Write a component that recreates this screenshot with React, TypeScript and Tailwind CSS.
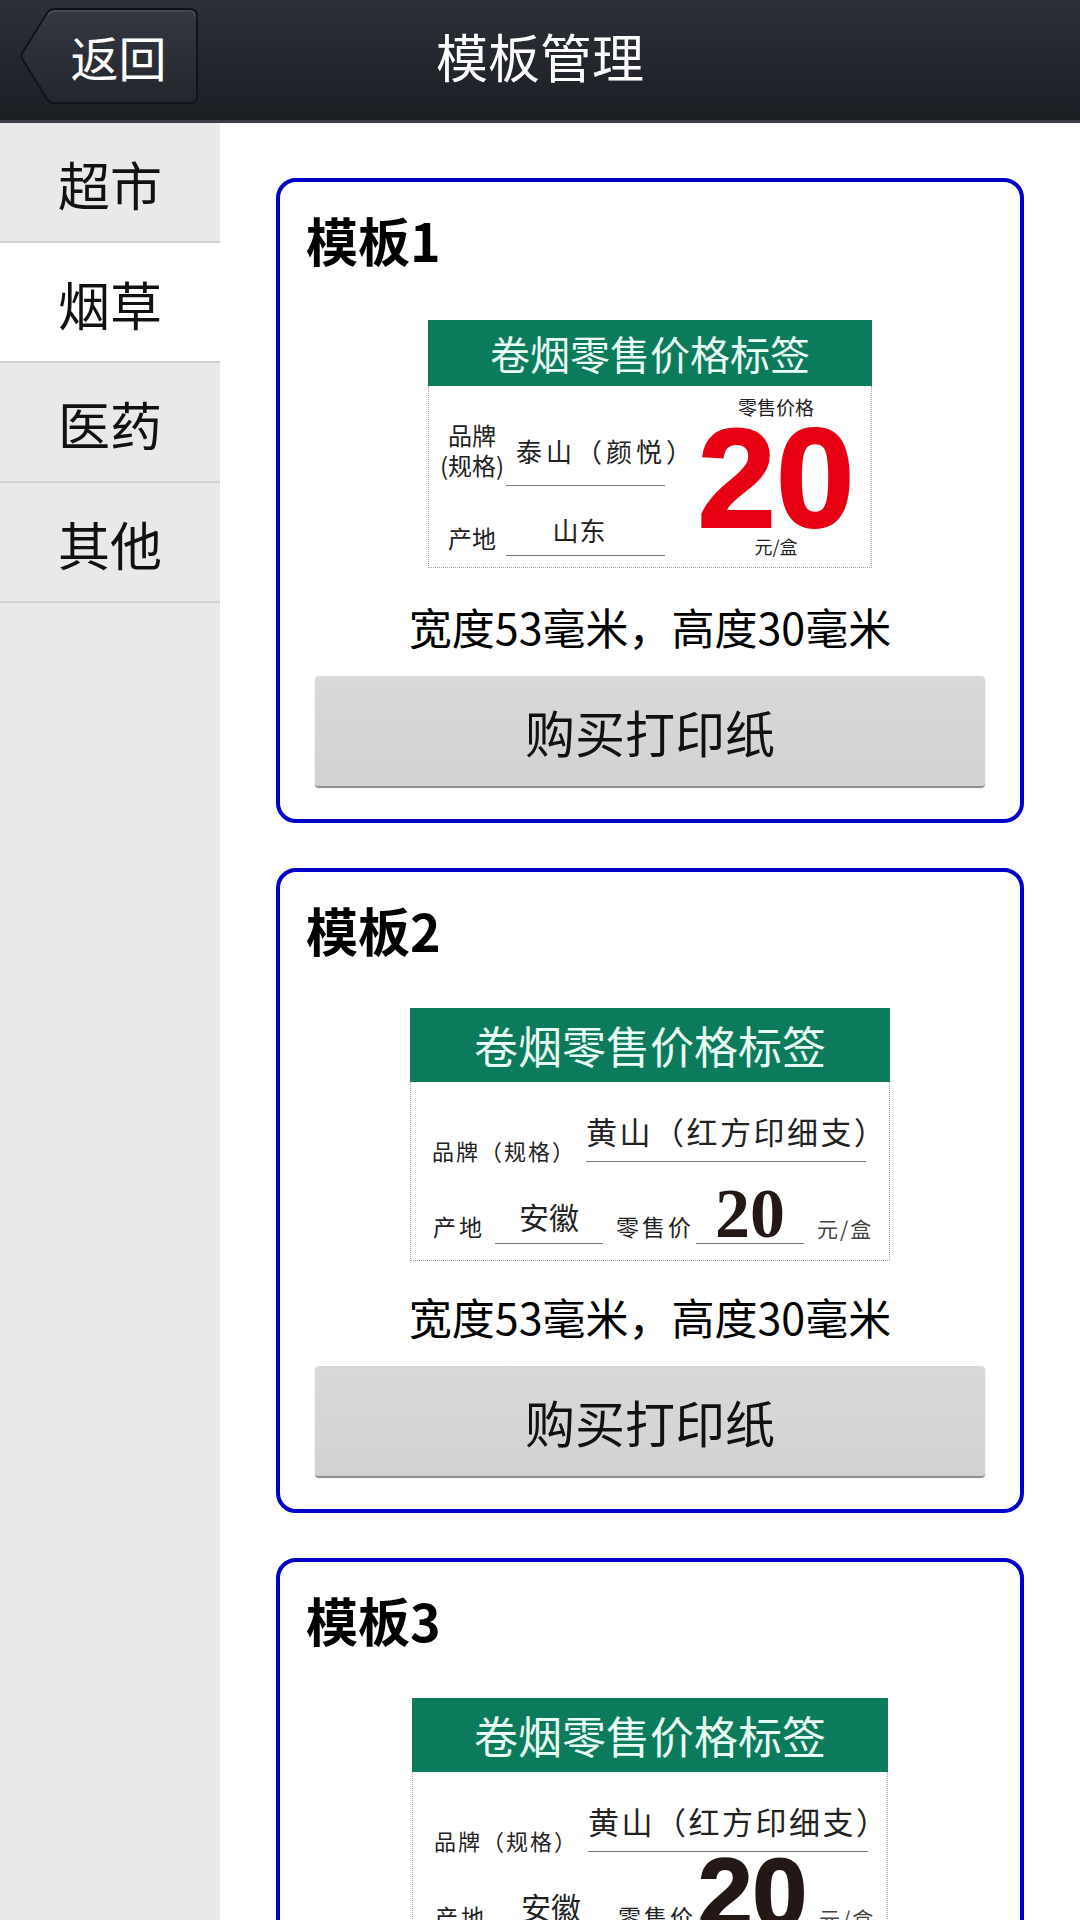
import React from 'react'

const cjk = "font-['Noto_Sans_CJK_SC','Noto_Sans',sans-serif]"

function BackButton() {
  return (
    <div className="relative mb-[9px] ml-[17px] flex h-[96px] w-[181px] items-center justify-center pl-[22px]">
      <svg className="absolute inset-0" width="181" height="96" viewBox="0 0 181 96">
        <defs>
          <linearGradient id="bb" x1="0" y1="0" x2="0" y2="1">
            <stop offset="0" stopColor="#343841" />
            <stop offset="1" stopColor="#23262c" />
          </linearGradient>
        </defs>
        <path
          d="M6 44 L30 5 Q33 1 38 1 L173 1 Q180 1 180 8 L180 88 Q180 95 173 95 L38 95 Q33 95 30 91 L6 52 Q3 48 6 44 Z"
          fill="url(#bb)"
          stroke="#111316"
          strokeWidth="2"
        />
        <path d="M31 7 Q34 3 39 3 L172 3 Q178 3 178 9" fill="none" stroke="#4a4e56" strokeWidth="1.5" />
      </svg>
      <span className="relative text-[48px] leading-none text-white">返回</span>
    </div>
  )
}

function Header() {
  return (
    <div className="grid h-[123px] shrink-0 grid-cols-[1fr_auto_1fr] items-center border-b-[3px] border-[#3c3f45] bg-linear-to-b from-[#2c3038] to-[#1b1e23]">
      <div className="justify-self-start">
        <BackButton />
      </div>
      <div className="pb-[9px] text-[52px] leading-none text-white">模板管理</div>
      <div />
    </div>
  )
}

const categories = ['超市', '烟草', '医药', '其他']

function Sidebar() {
  return (
    <div className="flex w-[220px] shrink-0 flex-col bg-[#e9e9e9]">
      {categories.map((c, i) => (
        <div
          key={c}
          className={`flex h-[120px] shrink-0 items-center justify-center border-b-2 border-[#d2d2d2] pt-[4px] text-[52px] leading-none text-[#111] ${
            i === 1 ? 'bg-white' : ''
          }`}
        >
          {c}
        </div>
      ))}
    </div>
  )
}

function LabelHead({ h, size }: { h: string; size: string }) {
  return (
    <div className={`flex shrink-0 items-center justify-center bg-[#0c7b5b] leading-none text-[#eafcf6] ${h} ${size}`}>
      卷烟零售价格标签
    </div>
  )
}

function LabelOne() {
  return (
    <div className="flex h-[248px] w-[444px] flex-col bg-white text-[#222]">
      <LabelHead h="h-[66px]" size="text-[40px]" />
      <div className="flex flex-1 border-x border-b border-dotted border-[#a0a0a0]">
        <div className="flex w-[261px] shrink-0 flex-col pl-[9px]">
          <div className="flex h-[100px] items-end">
            <div className="w-[68px] shrink-0 pb-[6px] text-center text-[24px] leading-[30px]">
              品牌
              <br />
              (规格)
            </div>
            <div className="w-[159px] shrink-0 whitespace-nowrap border-b border-[#7a7a7a] pb-[19px] pl-[10px] text-[26px] leading-[30px] tracking-[4px]">
              泰山（颜悦）
            </div>
          </div>
          <div className="flex h-[70px] items-end">
            <div className="w-[68px] shrink-0 pb-[3px] text-center text-[24px] leading-[30px]">产地</div>
            <div className="w-[159px] shrink-0 border-b border-[#7a7a7a] pb-[10px] pr-[12px] text-center text-[26px] leading-[30px] tracking-[1px]">
              山东
            </div>
          </div>
        </div>
        <div className="flex flex-1 flex-col items-center pr-[9px] pt-[10px]">
          <div className="text-[19px] leading-[22px]">零售价格</div>
          <div className="mt-[10px] font-['Liberation_Sans',Arial,sans-serif] text-[141px] font-bold leading-[100px] text-[#e60012] [-webkit-text-stroke:2px_#e60012]">
            20
          </div>
          <div className="mt-[7px] text-[18px] leading-[22px]">元/盒</div>
        </div>
      </div>
    </div>
  )
}

function LabelTwo({ variant }: { variant: 'serif' | 'sans' }) {
  return (
    <div className={`flex h-[253px] flex-col bg-white text-[#222] ${variant === 'serif' ? 'w-[480px]' : 'w-[476px]'}`}>
      <LabelHead h="h-[74px]" size="text-[44px]" />
      <div className="flex flex-1 flex-col border-x border-b border-dotted border-[#a0a0a0]">
        <div className="flex h-[80px] shrink-0 items-end pl-[21px]">
          <div className="mb-[-2px] whitespace-nowrap text-[22px] leading-[28px] tracking-[2px]">品牌（规格）</div>
          <div className="ml-[10px] w-[280px] shrink-0 whitespace-nowrap border-b border-[#7a7a7a] pb-[12px] text-[31px] leading-[36px] tracking-[2.5px]">
            黄山（红方印细支）
          </div>
        </div>
        <div className="flex h-[82px] shrink-0 items-end pl-[22px]">
          <div className="mb-[4px] whitespace-nowrap text-[23px] leading-[28px] tracking-[3px]">产地</div>
          <div className="ml-[10px] w-[108px] shrink-0 border-b border-[#7a7a7a] pb-[10px] text-center text-[30px] leading-[34px]">
            安徽
          </div>
          <div className="mb-[4px] ml-[13px] whitespace-nowrap text-[23px] leading-[28px] tracking-[3px]">零售价</div>
          <div className="ml-[2px] w-[108px] shrink-0 border-b border-[#7a7a7a] text-center text-[#231815]">
            {variant === 'serif' ? (
              <div className="pb-[1px] font-['Liberation_Serif','Times_New_Roman',serif] text-[70px] font-bold leading-[56px]">20</div>
            ) : (
              <div className="font-['Liberation_Sans',Arial,sans-serif] text-[98px] font-bold leading-[80px] [-webkit-text-stroke:2px_#231815]">
                20
              </div>
            )}
          </div>
          <div className="mb-[3px] ml-[13px] whitespace-nowrap text-[21px] leading-[26px] tracking-[2px] text-[#444]">元/盒</div>
        </div>
      </div>
    </div>
  )
}

function TemplateCard({ title, label }: { title: string; label: React.ReactNode }) {
  return (
    <div className="mx-[56px] mb-[45px] rounded-[20px] border-[4px] border-[#0000c8] bg-white px-[26px] pb-[33px] pt-[28px]">
      <div className="text-[52px] font-bold leading-[60px] text-black">{title}</div>
      <div className="mt-[49px] flex h-[250px] items-center justify-center">{label}</div>
      <div className="mt-[32px] whitespace-nowrap text-center text-[43px] leading-[50px] text-black">宽度53毫米，高度30毫米</div>
      <div className="mx-[9px] mt-[25px] flex h-[110px] items-center justify-center rounded-[4px] bg-linear-to-b from-[#d9d9d9] to-[#d2d2d2] text-[50px] leading-none text-[#111] shadow-[0_2px_1px_#8a8a8a]">
        购买打印纸
      </div>
    </div>
  )
}

export default function App() {
  return (
    <div className={`flex h-[1920px] w-[1080px] flex-col overflow-hidden bg-white ${cjk}`}>
      <Header />
      <div className="flex min-h-0 flex-1">
        <Sidebar />
        <div className="flex-1 overflow-hidden pt-[55px]">
          <TemplateCard title="模板1" label={<LabelOne />} />
          <TemplateCard title="模板2" label={<LabelTwo variant="serif" />} />
          <TemplateCard title="模板3" label={<LabelTwo variant="sans" />} />
        </div>
      </div>
    </div>
  )
}
